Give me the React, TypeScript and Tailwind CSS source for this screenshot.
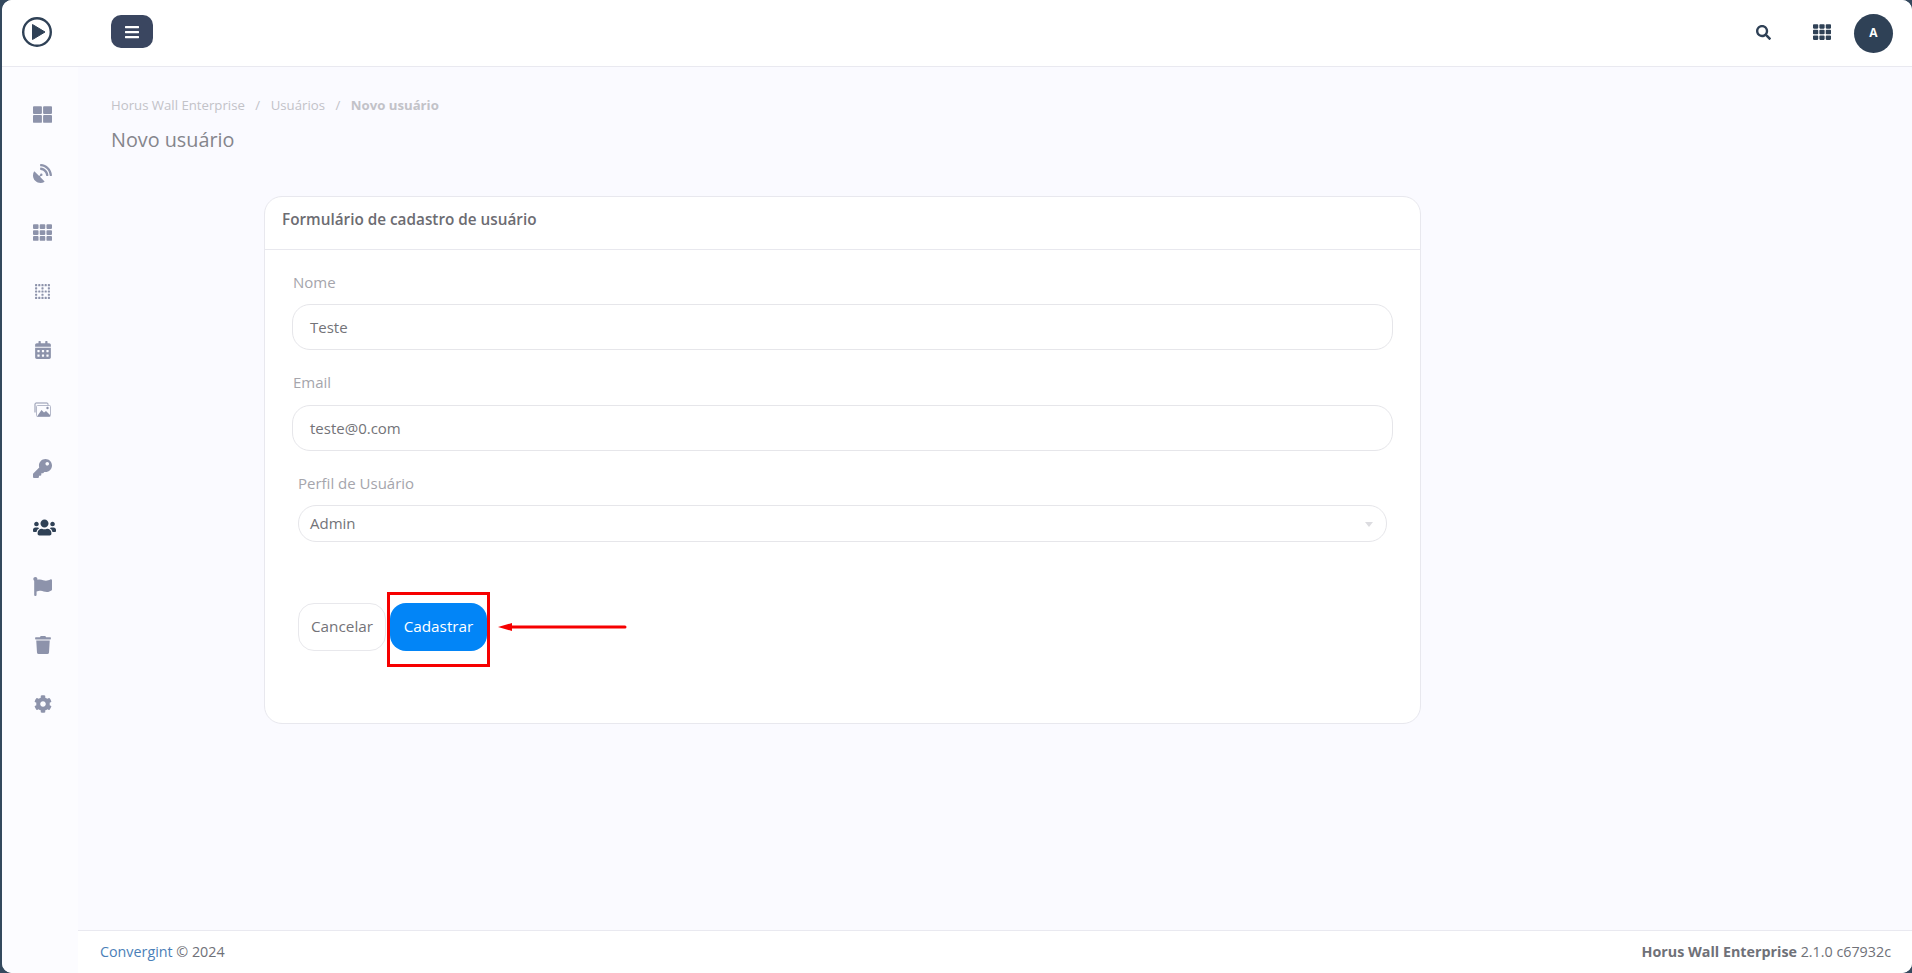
import React from "react";
import {
  FaBars,
  FaBorderNone,
  FaCalendarAlt,
  FaCog,
  FaFlag,
  FaKey,
  FaSatelliteDish,
  FaSearch,
  FaTh,
  FaThLarge,
  FaTrash,
  FaUsers,
} from "react-icons/fa";

const Logo = () => (
  <svg width="32" height="32" viewBox="0 0 32 32" fill="none">
    <circle cx="16" cy="16" r="13.8" stroke="#2f4156" strokeWidth="2.4" />
    <path d="M11.5 8.5 L24 16 L11.5 23.5 Z" fill="#2f4156" stroke="#2f4156" strokeWidth="1" strokeLinejoin="round" />
  </svg>
);

// stacked pictures, thin frames with solid hills
const ImagesIcon = () => (
  <svg width="17" height="15" viewBox="0 0 17 15" fill="none">
    <path d="M1 10.5 V2 a1 1 0 0 1 1 -1 H13 a1 1 0 0 1 1 1 V2.8" stroke="#8d93ab" strokeWidth="1" />
    <rect x="2.5" y="3.5" width="14" height="11" rx="1" stroke="#b5b9ca" strokeWidth="1" />
    <path d="M3 14.5 L7.5 8 L10 10.5 L12 9 L16 13 V14.5 Z" fill="#8d93ab" />
    <circle cx="13.5" cy="6" r="1.2" fill="#8d93ab" />
  </svg>
);

const navItems = [
  { icon: <FaThLarge className="text-[19px] text-[#8d93ab]" /> },
  { icon: <FaSatelliteDish className="text-[19px] text-[#8d93ab]" /> },
  { icon: <FaTh className="text-[19px] text-[#8d93ab]" /> },
  { icon: <FaBorderNone className="text-[17px] text-[#8d93ab]" /> },
  { icon: <FaCalendarAlt className="text-[18px] text-[#8d93ab]" /> },
  { icon: <ImagesIcon /> },
  { icon: <FaKey className="text-[19px] text-[#8d93ab]" /> },
  { icon: <FaUsers className="ml-[4px] text-[23px] text-[#2f4156]" /> },
  { icon: <FaFlag className="text-[19px] text-[#8d93ab]" /> },
  { icon: <FaTrash className="text-[18px] text-[#8d93ab]" /> },
  { icon: <FaCog className="text-[18px] text-[#8d93ab]" /> },
];

const App = () => {
  return (
    <div className="h-[973px] w-[1912px] overflow-hidden bg-[#34495e] font-['Open_Sans',sans-serif]">
      <div className="ml-[2px] flex h-full flex-col overflow-hidden rounded-[10px] bg-white">
        <header className="flex h-[67px] shrink-0 items-center border-b border-[#e9e9f0] bg-white">
          <div className="mb-[2px] flex w-[109px] justify-start pl-[19px]">
            <Logo />
          </div>
          <button className="mb-[3px] flex h-[33px] w-[42px] items-center justify-center rounded-[10px] bg-[#3a4660] text-white">
            <FaBars className="text-[16px]" />
          </button>
          <div className="ml-auto flex items-center">
            <FaSearch className="mb-[1px] mr-[42px] text-[15px] text-[#2f4156]" />
            <FaTh className="mb-[2px] mr-[23px] text-[18px] text-[#2f4156]" />
            <div className="mr-[19px] flex h-[39px] w-[39px] items-center justify-center rounded-full bg-[#2f4156] text-[12px] font-bold text-white">
              A
            </div>
          </div>
        </header>

        <div className="flex min-h-0 flex-1">
          <aside className="flex w-[76px] shrink-0 flex-col items-center bg-[#fcfcff] pl-[5px] pt-[17.5px]">
            {navItems.map((item, i) => (
              <div key={i} className="flex h-[59px] shrink-0 items-center justify-center">
                {item.icon}
              </div>
            ))}
          </aside>

          <div className="flex min-w-0 flex-1 flex-col">
            <main className="flex-1 bg-[#fafaff] pl-[33px] pt-[29px]">
              <nav className="flex h-[20px] items-center text-[13.2px] text-[#c2c2c8]">
                <span>Horus Wall Enterprise</span>
                <span className="mx-[10.5px]">/</span>
                <span>Usuários</span>
                <span className="mx-[10.5px]">/</span>
                <span className="font-bold">Novo usuário</span>
              </nav>
              <h1 className="mt-[10px] h-[28px] text-[19.8px] leading-[28px] text-[#85858c]">Novo usuário</h1>

              <section className="relative ml-[153px] mt-[42px] h-[528px] w-[1157px] rounded-[18px] border border-[#e8e8ee] bg-white">
                <div className="flex h-[53px] items-center border-b border-[#e8e8ee] pb-[8px] pl-[17px] text-[15.3px] font-semibold text-[#6c6c72]">
                  Formulário de cadastro de usuário
                </div>
                <div className="px-[27px] pt-[23px]">
                  <label className="block h-[22px] pl-[1px] text-[15px] leading-[18px] text-[#a5a5ac]">Nome</label>
                  <div className="mt-[9px] flex h-[46px] items-center rounded-[18px] border border-[#e6e6ea] pl-[17px] text-[15px] text-[#737378]">
                    Teste
                  </div>
                  <label className="mt-[23px] block h-[22px] pl-[1px] text-[15px] leading-[18px] text-[#a5a5ac]">Email</label>
                  <div className="mt-[10px] flex h-[46px] items-center rounded-[18px] border border-[#e6e6ea] pl-[17px] text-[15px] text-[#737378]">
                    teste@0.com
                  </div>
                  <div className="px-[6px]">
                    <label className="mt-[23px] block h-[22px] text-[15px] leading-[18px] text-[#a5a5ac]">Perfil de Usuário</label>
                    <div className="mt-[9px] flex h-[37px] items-center justify-between rounded-[18px] border border-[#e6e6ea] pl-[11px] pr-[13px] text-[15px] text-[#737378]">
                      <span>Admin</span>
                      <span className="mt-[1px] h-0 w-0 border-x-[4px] border-t-[5px] border-x-transparent border-t-[#dcdce0]" />
                    </div>
                    <div className="mt-[61px] flex items-center gap-[4px]">
                      <button className="h-[48px] w-[88px] rounded-[16px] border border-[#e8e8ec] bg-white pb-[2px] text-[15.3px] text-[#737378]">
                        Cancelar
                      </button>
                      <button className="h-[48px] w-[97px] rounded-[16px] bg-[#0285f7] pb-[2px] text-[15.3px] font-medium text-white">
                        Cadastrar
                      </button>
                    </div>
                  </div>
                </div>
                {/* red annotation from the screenshot */}
                <div className="absolute left-[122px] top-[395px] h-[75px] w-[103px] border-[3px] border-[#f60000]" />
                <svg className="absolute left-[233px] top-[422px]" width="130" height="16" viewBox="0 0 130 16">
                  <path d="M0 8 L14 4 L14 12 Z" fill="#f60000" />
                  <line x1="12" y1="8" x2="127" y2="8" stroke="#f60000" strokeWidth="3" strokeLinecap="round" />
                </svg>
              </section>
            </main>

            <footer className="flex h-[43px] shrink-0 items-center justify-between border-t border-[#e9e9f0] bg-white pl-[22px] pr-[21px] text-[14.3px] text-[#6f7178]">
              <span>
                <span className="text-[#4b7fb8]">Convergint</span> © 2024
              </span>
              <span>
                <span className="font-bold">Horus Wall Enterprise</span> 2.1.0 c67932c
              </span>
            </footer>
          </div>
        </div>
      </div>
    </div>
  );
};

export default App;
